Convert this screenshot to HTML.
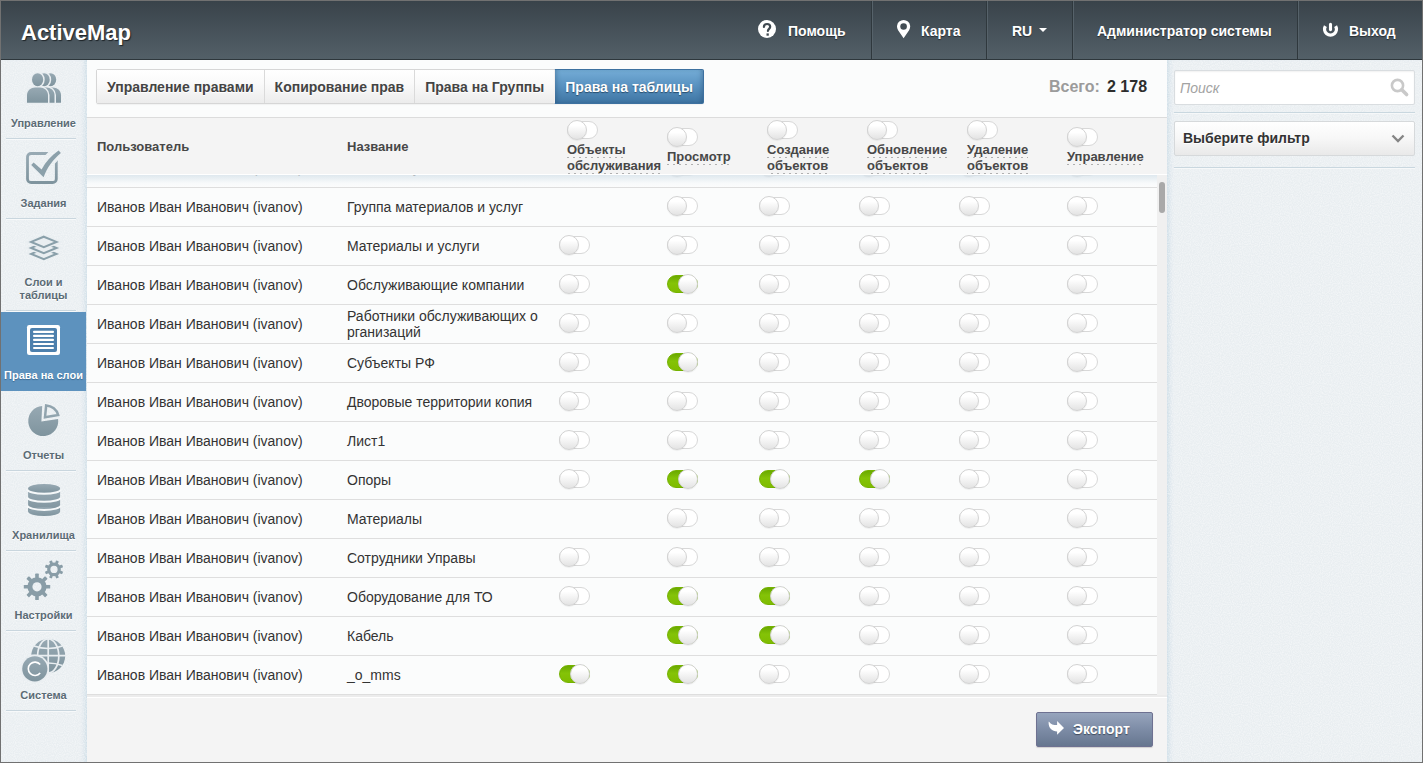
<!DOCTYPE html><html><head><meta charset="utf-8"><style>
*{box-sizing:border-box;margin:0;padding:0}
html,body{width:1423px;height:763px;overflow:hidden;background:#fff;font-family:"Liberation Sans",sans-serif}
#frame{position:absolute;left:0;top:0;width:1423px;height:763px;border:1px solid #717171;overflow:hidden;background:#fafbfb}
.a{position:absolute}
#hdr{position:absolute;left:0;top:0;width:1421px;height:59px;background:linear-gradient(#39434a,#536068);border-bottom:1px solid #2e373c}
#logo{position:absolute;left:20px;top:19px;font-size:22px;font-weight:bold;color:#fff;text-shadow:1px 1px 1px #1d2327;line-height:26px}
.hsep{position:absolute;top:0;width:2px;height:58px;border-left:1px solid #2f383d;border-right:1px solid #56626a}
.hitem{position:absolute;top:22px;font-size:14px;font-weight:bold;color:#fff;line-height:17px;text-shadow:0 1px 1px #262d31;white-space:nowrap}
#side{position:absolute;left:0;top:59px;width:86px;height:702px;background:#e9eef1;box-shadow:inset -5px 0 5px -3px #c9dbe6}
.sl{position:absolute;left:0;width:85px;text-align:center;font-size:11px;font-weight:bold;color:#5b6b75;line-height:13px;text-shadow:0 1px 0 #fff;white-space:nowrap}
.sd{position:absolute;left:5px;width:70px;height:1px;background:#c9d6de;box-shadow:0 1px 0 #f7f9fa}
#main{position:absolute;left:86px;top:59px;width:1080px;height:702px;background:#fbfcfc}
#right{position:absolute;left:1166px;top:59px;width:255px;height:702px;background:#e9eef1;box-shadow:inset 5px 0 5px -3px #c9dbe6}

.tab{height:33px;padding:0 10px;font-size:14px;font-weight:bold;color:#444;line-height:35px;white-space:nowrap;background:linear-gradient(#fff,#fafafa 40%,#ececec);text-shadow:0 1px 0 #fff}
.tab.act{background:linear-gradient(#74acd6,#5891c0 50%,#3e75a3);color:#fff;text-shadow:0 1px 1px #284d6c;margin:-1px -1px -1px 0;height:35px;line-height:35px;border:1px solid #3d71a0;border-left-color:#f4f1f1;border-radius:0 2px 2px 0;padding:0 10px 0 10px;box-shadow:inset 4px 0 5px -3px rgba(20,50,80,0.35),inset -4px 0 5px -3px rgba(20,50,80,0.35)}
.row{left:0;width:1070px;height:39px;border-bottom:1px solid #dedede;background:#fbfcfc}
.rt{font-size:14px;color:#333;line-height:16px;white-space:nowrap}
.th{font-size:13px;font-weight:bold;color:#474747;line-height:16px;white-space:nowrap}
.th2{font-size:13px;font-weight:bold;color:#474747;line-height:16px;white-space:nowrap}
.th2 span{padding-bottom:1px;background:linear-gradient(90deg,#b0b0b0 2px,transparent 2px) 0 100%/6px 1px repeat-x}
.tg{position:absolute;width:31px;height:20px}
.tg:before{content:"";position:absolute;left:0;top:1px;width:31px;height:18px;border-radius:9px;background:#fff;border:1px solid #d8d8d8;box-sizing:border-box}
.tg i{position:absolute;left:0;top:0;width:20px;height:20px;border-radius:50%;background:linear-gradient(#fff 25%,#e3e3e3);border:1px solid #d3d3d3;box-sizing:border-box;box-shadow:0 1px 1px rgba(0,0,0,0.06)}
.tg.on:before{background:linear-gradient(#6aa900,#84c307 45%,#7fbc00);border-color:#74b200}
.tg.on i{left:11px}
.btn{width:117px;height:35px;border:1px solid #6e7191;border-radius:2px;background:linear-gradient(#97a5bd,#7d8ca6 50%,#66768f);font-size:14px;font-weight:bold;color:#fff;line-height:33px;padding-left:36px;text-shadow:0 1px 1px #3e4a5c;box-shadow:0 1px 1px rgba(0,0,0,0.15)}
.dd{width:241px;height:35px;border:1px solid #d6d9db;border-radius:2px;background:linear-gradient(#fff,#f7f7f7 50%,#e9e9e9);font-size:14px;font-weight:bold;color:#333;line-height:33px;padding-left:8px;text-shadow:0 1px 0 #fff}
</style></head><body><div id="frame">
<div id="hdr"><div id="logo">ActiveMap</div>
<svg class="a" style="left:756px;top:18px" width="20" height="20" viewBox="0 0 20 20"><circle cx="10" cy="10" r="9" fill="#fff"/><path d="M6.9,8 C6.9,6 8.3,5 10.1,5 C12,5 13.2,6.1 13.2,7.7 C13.2,9.7 10.9,10 10.9,12" fill="none" stroke="#404a51" stroke-width="2.2" stroke-linecap="round"/><rect x="9.5" y="14.4" width="2.3" height="2.3" fill="#404a51"/></svg>
<div class="hitem" style="left:787px">Помощь</div>
<div class="hsep" style="left:870px"></div>
<svg class="a" style="left:895px;top:18px" width="16" height="20" viewBox="0 0 16 20"><path d="M7.6,19.3 L2.1,11.2 A6.6,6.6 0 1 1 13.1,11.2 Z" fill="#fff"/><circle cx="7.6" cy="7.5" r="3.3" fill="#434d54"/></svg>
<div class="hitem" style="left:920px">Карта</div>
<div class="hsep" style="left:985px"></div>
<div class="hitem" style="left:1011px">RU</div>
<svg class="a" style="left:1037px;top:26px" width="10" height="6" viewBox="0 0 10 6"><path d="M1,1 L9,1 L5,5 Z" fill="#fff"/></svg>
<div class="hsep" style="left:1071px"></div>
<div class="hitem" style="left:1096px">Администратор системы</div>
<div class="hsep" style="left:1296px"></div>
<svg class="a" style="left:1320px;top:20px" width="20" height="20" viewBox="0 0 20 20"><path d="M4.4,5.2 A5.9,5.9 0 1 0 14.6,5.2" fill="none" stroke="#fff" stroke-width="3.3"/><path d="M9.5,3.4 L9.5,8.6" stroke="#fff" stroke-width="3.1" stroke-linecap="round"/></svg>
<div class="hitem" style="left:1348px">Выход</div>
</div>
<div id="side"></div>
<svg class="a" style="left:0;top:59px" width="86" height="702"><filter id="nz" x="0" y="0" width="100%" height="100%"><feTurbulence type="fractalNoise" baseFrequency="0.9" numOctaves="1" seed="3"/><feColorMatrix values="0 0 0 0 1  0 0 0 0 1  0 0 0 0 1  0 0 0 -2.2 1.45"/></filter><rect width="86" height="702" filter="url(#nz)" opacity="0.45"/></svg>
<div class="a" style="left:0;top:311px;width:85px;height:79px;background:#5d92be"></div>
<div class="sl" style="top:116px">Управление</div>
<div class="sl" style="top:196px">Задания</div>
<div class="sl" style="top:275px">Слои и<br>таблицы</div>
<div class="sl" style="top:368px;color:#fff;text-shadow:0 1px 1px #3d6a92">Права на слои</div>
<div class="sl" style="top:448px">Отчеты</div>
<div class="sl" style="top:528px">Хранилища</div>
<div class="sl" style="top:608px">Настройки</div>
<div class="sl" style="top:688px">Система</div>
<div class="sd" style="top:137px"></div>
<div class="sd" style="top:217px"></div>
<div class="sd" style="top:309px"></div>
<div class="sd" style="top:469px"></div>
<div class="sd" style="top:549px"></div>
<div class="sd" style="top:629px"></div>
<div class="sd" style="top:709px"></div>
<svg class="a" style="left:-1px;top:-1px" width="1423" height="763" viewBox="0 0 1423 763"><defs><linearGradient id="ig" x1="0" y1="0" x2="0" y2="1"><stop offset="0" stop-color="#97a9b3"/><stop offset="1" stop-color="#7f949e"/></linearGradient><mask id="gm"><rect x="0" y="0" width="100" height="763" fill="#fff"/><circle cx="37" cy="586.8" r="4.6" fill="#000"/><circle cx="54" cy="569.4" r="3.6" fill="#000"/></mask></defs><g><ellipse cx="50.60" cy="79.7" rx="5.6" ry="6.5" fill="url(#ig)"/><path d="M40.00,102.8 L40.00,95 C40.00,90.5 44.00,87.4 48.00,87.4 L53.00,87.4 C57.00,87.4 61.00,90.5 61.00,95 L61.00,102.8 Z" fill="url(#ig)"/><ellipse cx="44.10" cy="79.7" rx="5.6" ry="6.5" fill="none" stroke="#e9eef1" stroke-width="3"/><path d="M33.50,102.8 L33.50,95 C33.50,90.5 37.50,87.4 41.50,87.4 L46.50,87.4 C50.50,87.4 54.50,90.5 54.50,95 L54.50,102.8 Z" fill="none" stroke="#e9eef1" stroke-width="3"/><ellipse cx="44.10" cy="79.7" rx="5.6" ry="6.5" fill="url(#ig)"/><path d="M33.50,102.8 L33.50,95 C33.50,90.5 37.50,87.4 41.50,87.4 L46.50,87.4 C50.50,87.4 54.50,90.5 54.50,95 L54.50,102.8 Z" fill="url(#ig)"/><ellipse cx="37.60" cy="79.7" rx="5.6" ry="6.5" fill="none" stroke="#e9eef1" stroke-width="3"/><path d="M27.00,102.8 L27.00,95 C27.00,90.5 31.00,87.4 35.00,87.4 L40.00,87.4 C44.00,87.4 48.00,90.5 48.00,95 L48.00,102.8 Z" fill="none" stroke="#e9eef1" stroke-width="3"/><ellipse cx="37.60" cy="79.7" rx="5.6" ry="6.5" fill="url(#ig)"/><path d="M27.00,102.8 L27.00,95 C27.00,90.5 31.00,87.4 35.00,87.4 L40.00,87.4 C44.00,87.4 48.00,90.5 48.00,95 L48.00,102.8 Z" fill="url(#ig)"/></g><mask id="cm"><rect x="0" y="100" width="100" height="120" fill="#fff"/><path d="M50.9,149.3 L43.96,156.8 L53.08,165.6 L60.3,157.8 L62,149.3 Z" fill="#000"/></mask><rect x="27.5" y="153.5" width="28.8" height="29" rx="3.6" fill="none" stroke="url(#ig)" stroke-width="2.8" mask="url(#cm)"/><path d="M31.2,165 L33.6,162.4 L41.6,169.6 C45.5,162 51.5,155.5 58.6,150.6 L60.9,153.1 C53,159.5 47,168 43.6,177.2 Z" fill="#8ba0aa"/><path d="M43.8,248.70 L56.5,253.90 L43.8,259.10 L31.1,253.90 Z" fill="#e9eef1" stroke="#8aa0aa" stroke-width="2"/><path d="M43.8,242.70 L56.5,247.90 L43.8,253.10 L31.1,247.90 Z" fill="#e9eef1" stroke="#e9eef1" stroke-width="5"/><path d="M43.8,242.70 L56.5,247.90 L43.8,253.10 L31.1,247.90 Z" fill="#e9eef1" stroke="#8aa0aa" stroke-width="2"/><path d="M43.8,236.70 L56.5,241.90 L43.8,247.10 L31.1,241.90 Z" fill="#e9eef1" stroke="#e9eef1" stroke-width="5"/><path d="M43.8,236.70 L56.5,241.90 L43.8,247.10 L31.1,241.90 Z" fill="#e9eef1" stroke="#8aa0aa" stroke-width="2"/><rect x="27" y="325" width="33" height="30" rx="2.2" fill="#fff"/><rect x="30" y="328" width="27" height="24" rx="2" fill="#4d80ad"/><rect x="33" y="330.8" width="21" height="2.1" rx="1" fill="#fff"/><rect x="33" y="334.8" width="21" height="2.1" rx="1" fill="#fff"/><rect x="33" y="338.8" width="21" height="2.1" rx="1" fill="#fff"/><rect x="33" y="342.9" width="21" height="2.1" rx="1" fill="#fff"/><rect x="33" y="346.9" width="21" height="2.1" rx="1" fill="#fff"/><path d="M41.4,421.4 L42.2,406.1 A15,15 0 1 0 58.1,419 Z" fill="url(#ig)"/><path d="M45,417.2 L46.2,405.4 A13,13 0 0 1 58.2,415 Z" fill="none" stroke="#91a4ae" stroke-width="2.5" stroke-linejoin="miter"/><g fill="url(#ig)"><rect x="28.1" y="488.4" width="32" height="23.2"/><ellipse cx="44.1" cy="488.4" rx="16" ry="4.3"/><ellipse cx="44.1" cy="511.6" rx="16" ry="4.3"/></g><path d="M27.5,489.4 A16.6,4.3 0 0 0 60.7,489.4" fill="none" stroke="#f5f8f9" stroke-width="2"/><path d="M27.5,497.5 A16.6,4.3 0 0 0 60.7,497.5" fill="none" stroke="#f5f8f9" stroke-width="2"/><path d="M27.5,505.6 A16.6,4.3 0 0 0 60.7,505.6" fill="none" stroke="#f5f8f9" stroke-width="2"/><g fill="#899da7" mask="url(#gm)"><circle cx="37.00" cy="586.80" r="9.60"/><rect x="35.20" y="573.60" width="3.60" height="4.60" rx="0.6" transform="rotate(0.00 37.00 586.80)"/><rect x="35.20" y="573.60" width="3.60" height="4.60" rx="0.6" transform="rotate(45.00 37.00 586.80)"/><rect x="35.20" y="573.60" width="3.60" height="4.60" rx="0.6" transform="rotate(90.00 37.00 586.80)"/><rect x="35.20" y="573.60" width="3.60" height="4.60" rx="0.6" transform="rotate(135.00 37.00 586.80)"/><rect x="35.20" y="573.60" width="3.60" height="4.60" rx="0.6" transform="rotate(180.00 37.00 586.80)"/><rect x="35.20" y="573.60" width="3.60" height="4.60" rx="0.6" transform="rotate(225.00 37.00 586.80)"/><rect x="35.20" y="573.60" width="3.60" height="4.60" rx="0.6" transform="rotate(270.00 37.00 586.80)"/><rect x="35.20" y="573.60" width="3.60" height="4.60" rx="0.6" transform="rotate(315.00 37.00 586.80)"/><circle cx="54.00" cy="569.40" r="6.80"/><rect x="52.55" y="560.10" width="2.90" height="3.50" rx="0.6" transform="rotate(22.50 54.00 569.40)"/><rect x="52.55" y="560.10" width="2.90" height="3.50" rx="0.6" transform="rotate(67.50 54.00 569.40)"/><rect x="52.55" y="560.10" width="2.90" height="3.50" rx="0.6" transform="rotate(112.50 54.00 569.40)"/><rect x="52.55" y="560.10" width="2.90" height="3.50" rx="0.6" transform="rotate(157.50 54.00 569.40)"/><rect x="52.55" y="560.10" width="2.90" height="3.50" rx="0.6" transform="rotate(202.50 54.00 569.40)"/><rect x="52.55" y="560.10" width="2.90" height="3.50" rx="0.6" transform="rotate(247.50 54.00 569.40)"/><rect x="52.55" y="560.10" width="2.90" height="3.50" rx="0.6" transform="rotate(292.50 54.00 569.40)"/><rect x="52.55" y="560.10" width="2.90" height="3.50" rx="0.6" transform="rotate(337.50 54.00 569.40)"/></g><circle cx="48.2" cy="656" r="17" fill="url(#ig)"/><g fill="none" stroke="#e9eef1" stroke-width="1.7"><line x1="48.2" y1="638" x2="48.2" y2="674"/><line x1="30" y1="655.6" x2="66" y2="655.6"/><ellipse cx="48.2" cy="656" rx="10.6" ry="17"/><path d="M34,646 Q48.2,651 62.4,646"/><path d="M34,665.5 Q48.2,660.5 62.4,665.5"/></g><circle cx="34.8" cy="668.8" r="14.2" fill="#e9eef1"/><circle cx="34.8" cy="668.8" r="12.6" fill="url(#ig)"/><path d="M40.2,664.6 A6.7,6.7 0 1 0 40.2,673" fill="none" stroke="#fff" stroke-width="1.6"/></svg>
<div id="main"></div>
<div class="a" style="left:95px;top:68px;height:35px;border:1px solid #d6d6d6;border-radius:2px;background:#fff;display:flex;box-shadow:0 1px 1px rgba(0,0,0,0.04)">
<div class="tab" style="">Управление правами</div>
<div class="tab" style="border-left:1px solid #dadada;">Копирование прав</div>
<div class="tab" style="border-left:1px solid #dadada;">Права на Группы</div>
<div class="tab act">Права на таблицы</div></div>
<div class="a" style="left:1048px;top:77px;font-size:16px;font-weight:bold;color:#9b9b9b;line-height:18px;white-space:nowrap">Всего:</div>
<div class="a" style="left:1106px;top:77px;font-size:16px;font-weight:bold;color:#2d2d2d;line-height:18px;white-space:nowrap">2 178</div>
<div class="a" style="left:86px;top:173px;width:1070px;height:522px;overflow:hidden">
<div class="a row" style="top:-25px"></div>
<div class="a rt" style="left:10px;top:-14px">Иванов Иван Иванович (ivanov)</div>
<div class="a rt" style="left:264px;top:-14px">Объекты учета</div>
<div class="tg" style="left:580px;top:-17px"><i></i></div>
<div class="tg" style="left:672px;top:-17px"><i></i></div>
<div class="tg" style="left:772px;top:-17px"><i></i></div>
<div class="tg" style="left:872px;top:-17px"><i></i></div>
<div class="tg" style="left:980px;top:-17px"><i></i></div>
<div class="a row" style="top:14px"></div>
<div class="a rt" style="left:10px;top:25px">Иванов Иван Иванович (ivanov)</div>
<div class="a rt" style="left:260px;top:25px">Группа материалов и услуг</div>
<div class="tg" style="left:580px;top:22px"><i></i></div>
<div class="tg" style="left:672px;top:22px"><i></i></div>
<div class="tg" style="left:772px;top:22px"><i></i></div>
<div class="tg" style="left:872px;top:22px"><i></i></div>
<div class="tg" style="left:980px;top:22px"><i></i></div>
<div class="a row" style="top:53px"></div>
<div class="a rt" style="left:10px;top:64px">Иванов Иван Иванович (ivanov)</div>
<div class="a rt" style="left:260px;top:64px">Материалы и услуги</div>
<div class="tg" style="left:472px;top:61px"><i></i></div>
<div class="tg" style="left:580px;top:61px"><i></i></div>
<div class="tg" style="left:672px;top:61px"><i></i></div>
<div class="tg" style="left:772px;top:61px"><i></i></div>
<div class="tg" style="left:872px;top:61px"><i></i></div>
<div class="tg" style="left:980px;top:61px"><i></i></div>
<div class="a row" style="top:92px"></div>
<div class="a rt" style="left:10px;top:103px">Иванов Иван Иванович (ivanov)</div>
<div class="a rt" style="left:260px;top:103px">Обслуживающие компании</div>
<div class="tg" style="left:472px;top:100px"><i></i></div>
<div class="tg on" style="left:580px;top:100px"><i></i></div>
<div class="tg" style="left:672px;top:100px"><i></i></div>
<div class="tg" style="left:772px;top:100px"><i></i></div>
<div class="tg" style="left:872px;top:100px"><i></i></div>
<div class="tg" style="left:980px;top:100px"><i></i></div>
<div class="a row" style="top:131px"></div>
<div class="a rt" style="left:10px;top:142px">Иванов Иван Иванович (ivanov)</div>
<div class="a rt" style="left:260px;top:134px">Работники обслуживающих о<br>рганизаций</div>
<div class="tg" style="left:472px;top:139px"><i></i></div>
<div class="tg" style="left:580px;top:139px"><i></i></div>
<div class="tg" style="left:672px;top:139px"><i></i></div>
<div class="tg" style="left:772px;top:139px"><i></i></div>
<div class="tg" style="left:872px;top:139px"><i></i></div>
<div class="tg" style="left:980px;top:139px"><i></i></div>
<div class="a row" style="top:170px"></div>
<div class="a rt" style="left:10px;top:181px">Иванов Иван Иванович (ivanov)</div>
<div class="a rt" style="left:260px;top:181px">Субъекты РФ</div>
<div class="tg" style="left:472px;top:178px"><i></i></div>
<div class="tg on" style="left:580px;top:178px"><i></i></div>
<div class="tg" style="left:672px;top:178px"><i></i></div>
<div class="tg" style="left:772px;top:178px"><i></i></div>
<div class="tg" style="left:872px;top:178px"><i></i></div>
<div class="tg" style="left:980px;top:178px"><i></i></div>
<div class="a row" style="top:209px"></div>
<div class="a rt" style="left:10px;top:220px">Иванов Иван Иванович (ivanov)</div>
<div class="a rt" style="left:260px;top:220px">Дворовые территории копия</div>
<div class="tg" style="left:472px;top:217px"><i></i></div>
<div class="tg" style="left:580px;top:217px"><i></i></div>
<div class="tg" style="left:672px;top:217px"><i></i></div>
<div class="tg" style="left:772px;top:217px"><i></i></div>
<div class="tg" style="left:872px;top:217px"><i></i></div>
<div class="tg" style="left:980px;top:217px"><i></i></div>
<div class="a row" style="top:248px"></div>
<div class="a rt" style="left:10px;top:259px">Иванов Иван Иванович (ivanov)</div>
<div class="a rt" style="left:260px;top:259px">Лист1</div>
<div class="tg" style="left:472px;top:256px"><i></i></div>
<div class="tg" style="left:580px;top:256px"><i></i></div>
<div class="tg" style="left:672px;top:256px"><i></i></div>
<div class="tg" style="left:772px;top:256px"><i></i></div>
<div class="tg" style="left:872px;top:256px"><i></i></div>
<div class="tg" style="left:980px;top:256px"><i></i></div>
<div class="a row" style="top:287px"></div>
<div class="a rt" style="left:10px;top:298px">Иванов Иван Иванович (ivanov)</div>
<div class="a rt" style="left:260px;top:298px">Опоры</div>
<div class="tg" style="left:472px;top:295px"><i></i></div>
<div class="tg on" style="left:580px;top:295px"><i></i></div>
<div class="tg on" style="left:672px;top:295px"><i></i></div>
<div class="tg on" style="left:772px;top:295px"><i></i></div>
<div class="tg" style="left:872px;top:295px"><i></i></div>
<div class="tg" style="left:980px;top:295px"><i></i></div>
<div class="a row" style="top:326px"></div>
<div class="a rt" style="left:10px;top:337px">Иванов Иван Иванович (ivanov)</div>
<div class="a rt" style="left:260px;top:337px">Материалы</div>
<div class="tg" style="left:580px;top:334px"><i></i></div>
<div class="tg" style="left:672px;top:334px"><i></i></div>
<div class="tg" style="left:772px;top:334px"><i></i></div>
<div class="tg" style="left:872px;top:334px"><i></i></div>
<div class="tg" style="left:980px;top:334px"><i></i></div>
<div class="a row" style="top:365px"></div>
<div class="a rt" style="left:10px;top:376px">Иванов Иван Иванович (ivanov)</div>
<div class="a rt" style="left:260px;top:376px">Сотрудники Управы</div>
<div class="tg" style="left:472px;top:373px"><i></i></div>
<div class="tg" style="left:580px;top:373px"><i></i></div>
<div class="tg" style="left:672px;top:373px"><i></i></div>
<div class="tg" style="left:772px;top:373px"><i></i></div>
<div class="tg" style="left:872px;top:373px"><i></i></div>
<div class="tg" style="left:980px;top:373px"><i></i></div>
<div class="a row" style="top:404px"></div>
<div class="a rt" style="left:10px;top:415px">Иванов Иван Иванович (ivanov)</div>
<div class="a rt" style="left:260px;top:415px">Оборудование для ТО</div>
<div class="tg" style="left:472px;top:412px"><i></i></div>
<div class="tg on" style="left:580px;top:412px"><i></i></div>
<div class="tg on" style="left:672px;top:412px"><i></i></div>
<div class="tg" style="left:772px;top:412px"><i></i></div>
<div class="tg" style="left:872px;top:412px"><i></i></div>
<div class="tg" style="left:980px;top:412px"><i></i></div>
<div class="a row" style="top:443px"></div>
<div class="a rt" style="left:10px;top:454px">Иванов Иван Иванович (ivanov)</div>
<div class="a rt" style="left:260px;top:454px">Кабель</div>
<div class="tg on" style="left:580px;top:451px"><i></i></div>
<div class="tg on" style="left:672px;top:451px"><i></i></div>
<div class="tg" style="left:772px;top:451px"><i></i></div>
<div class="tg" style="left:872px;top:451px"><i></i></div>
<div class="tg" style="left:980px;top:451px"><i></i></div>
<div class="a row" style="top:482px"></div>
<div class="a rt" style="left:10px;top:493px">Иванов Иван Иванович (ivanov)</div>
<div class="a rt" style="left:260px;top:493px">_o_mms</div>
<div class="tg on" style="left:472px;top:490px"><i></i></div>
<div class="tg on" style="left:580px;top:490px"><i></i></div>
<div class="tg" style="left:672px;top:490px"><i></i></div>
<div class="tg" style="left:772px;top:490px"><i></i></div>
<div class="tg" style="left:872px;top:490px"><i></i></div>
<div class="tg" style="left:980px;top:490px"><i></i></div>
</div>
<div class="a" style="left:86px;top:173px;width:1070px;height:13px;background:linear-gradient(rgba(214,226,234,0.85),rgba(240,245,248,0.3) 70%,rgba(250,251,251,0))"></div>
<div class="a" style="left:86px;top:116px;width:1080px;height:57px;background:#f4f4f4;border-top:1px solid #dcdcdc;box-shadow:0 1px 0 #fff"></div>
<div class="a th" style="left:96px;top:138px">Пользователь</div>
<div class="a th" style="left:346px;top:138px">Название</div>
<div class="tg hd" style="left:566px;top:119px"><i></i></div>
<div class="a th2" style="left:566px;top:141px"><span>Объекты<br>обслуживания</span></div>
<div class="tg hd" style="left:666px;top:126px"><i></i></div>
<div class="a th2" style="left:666px;top:148px"><span>Просмотр</span></div>
<div class="tg hd" style="left:766px;top:119px"><i></i></div>
<div class="a th2" style="left:766px;top:141px"><span>Создание<br>объектов</span></div>
<div class="tg hd" style="left:866px;top:119px"><i></i></div>
<div class="a th2" style="left:866px;top:141px"><span>Обновление<br>объектов</span></div>
<div class="tg hd" style="left:966px;top:119px"><i></i></div>
<div class="a th2" style="left:966px;top:141px"><span>Удаление<br>объектов</span></div>
<div class="tg hd" style="left:1066px;top:126px"><i></i></div>
<div class="a th2" style="left:1066px;top:148px"><span>Управление</span></div>
<div class="a" style="left:1156px;top:174px;width:10px;height:520px;background:#f0f0f0"></div>
<div class="a" style="left:1158px;top:181px;width:6px;height:31px;border-radius:3px;background:#a9a9a9"></div>
<div class="a" style="left:86px;top:694px;width:1080px;height:2px;background:#ececec"></div>
<div class="a" style="left:86px;top:696px;width:1080px;height:65px;background:#f4f4f4;border-top:1px solid #fff"></div>
<div class="a btn" style="left:1035px;top:711px">Экспорт</div>
<svg class="a" style="left:1047px;top:720px" width="18" height="16" viewBox="0 0 18 16"><path d="M0.9,0.4 C2.5,3.3 5.5,4 9.1,4 L9.1,0.1 L16,6.9 L9.1,13.7 L9.1,10.4 C4.2,10.4 0.4,7 0.6,1.2 Z" fill="#fff"/></svg>
<div id="right"></div>
<svg class="a" style="left:1166px;top:59px" width="255" height="702"><rect width="255" height="702" filter="url(#nz)" opacity="0.45"/></svg>
<div class="a" style="left:1173px;top:69px;width:241px;height:35px;background:#fff;border:1px solid #d9dde0;border-radius:2px;box-shadow:inset 0 1px 2px rgba(0,0,0,0.06)"></div>
<div class="a" style="left:1179px;top:79px;font-size:14px;font-style:italic;color:#a3a3a3;line-height:16px">Поиск</div>
<svg class="a" style="left:1388px;top:76px" width="22" height="22" viewBox="0 0 22 22"><circle cx="8.5" cy="8.5" r="5.6" fill="none" stroke="#c9c9c9" stroke-width="2.6"/><path d="M12.8,12.8 L17.6,17.6" stroke="#c9c9c9" stroke-width="3.6" stroke-linecap="round"/></svg>
<div class="a" style="left:1173px;top:111px;width:241px;height:1px;background:#c9d7df;box-shadow:0 1px 0 #f6f8f9"></div>
<div class="a dd" style="left:1173px;top:120px">Выберите фильтр</div>
<svg class="a" style="left:1389px;top:131px" width="16" height="12" viewBox="0 0 16 12"><path d="M2.5,3.5 L8,9 L13.5,3.5" fill="none" stroke="#858585" stroke-width="2.4"/></svg>
<div class="a" style="left:1173px;top:166px;width:241px;height:1px;background:#c9d7df;box-shadow:0 1px 0 #f6f8f9"></div>
</div></body></html>
